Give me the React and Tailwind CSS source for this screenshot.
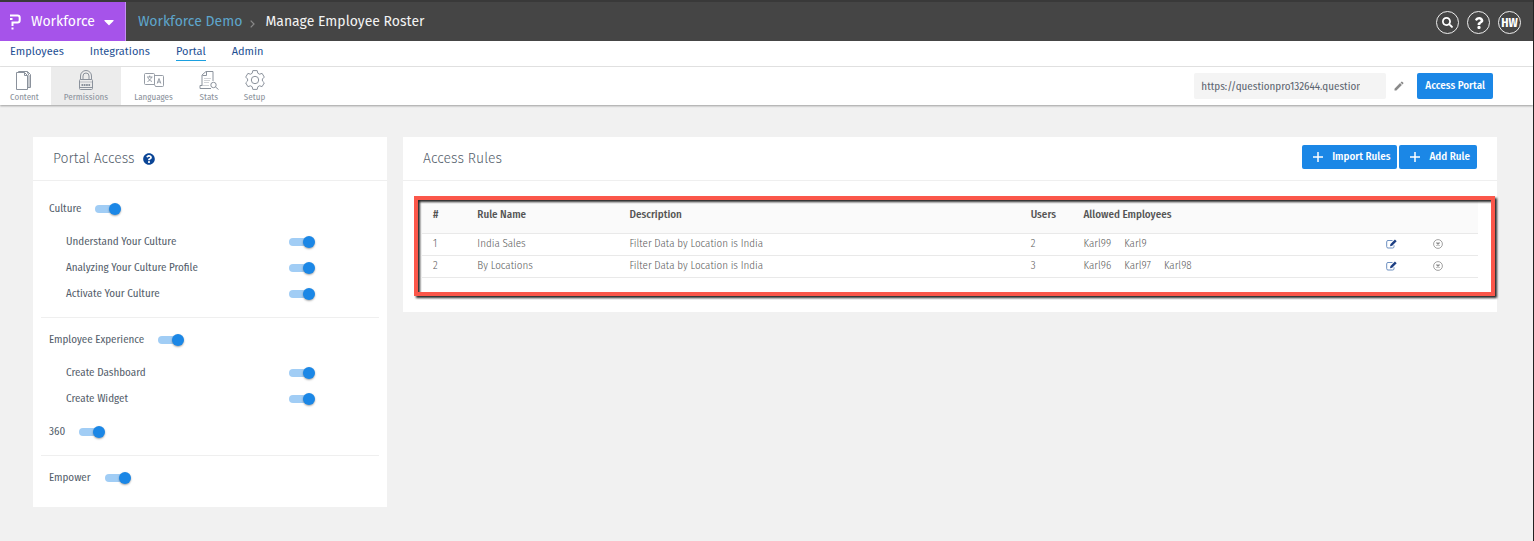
import { FaSearch, FaQuestion, FaQuestionCircle, FaCaretDown } from "react-icons/fa";
import { MdEdit } from "react-icons/md";

const TABS = ["Employees", "Integrations", "Portal", "Admin"];

const RULES = [
  { id: 1, name: "India Sales", description: "Filter Data by Location is India", users: 2, employees: ["Karl99", "Karl9"] },
  { id: 2, name: "By Locations", description: "Filter Data by Location is India", users: 3, employees: ["Karl96", "Karl97", "Karl98"] },
];

function ContentIcon() {
  return (
    <svg viewBox="0 0 20 20" className="h-5 w-5" fill="none" stroke="currentColor" strokeWidth="1" aria-hidden="true">
      <path d="M2.500 2.500h8l3 3v14h-11z" />
      <path d="M10.500 2.500v3h3" />
      <path d="M4.500 2.500v-1h9l3 3v13h-3M13 1.500l2 4v12" />
    </svg>
  );
}

function LockIcon() {
  return (
    <svg viewBox="0 0 20 20" className="h-5 w-5" fill="none" stroke="currentColor" strokeWidth="1" aria-hidden="true">
      <path d="M4.500 9.500v-3.500a5.500 5.500 0 0 1 11 0v3.500M7 9.500v-3.500a3 3 0 0 1 6 0v3.500" />
      <rect x="3.500" y="9.500" width="13" height="10" rx="1" />
      <path d="M3.500 12h13" strokeOpacity="0.500" />
      <path d="M5.500 15h9" strokeWidth="1.800" strokeDasharray="1.700 0.600" />
      <path d="M3.500 17.500h13" />
    </svg>
  );
}

function LanguagesIcon() {
  return (
    <svg viewBox="0 0 20 20" className="h-5 w-5" fill="none" stroke="currentColor" strokeWidth="0.900" aria-hidden="true">
      <path d="M10.500 14.500h-9a1 1 0 0 1-1-1v-9a1 1 0 0 1 1-1h8a1 1 0 0 1 1 1z" />
      <path d="M10.500 5.500h8a1 1 0 0 1 1 1v9a1 1 0 0 1-1 1h-7l-1-2" />
      <path d="M3 7h5.500M5.700 5.500v1.500M3.500 11.500c2-.8 3.500-2.500 4-4.500M4 7.500c.5 1.800 2 3.200 4 4" />
      <path d="M13.200 13.500l1.800-5 1.800 5M13.800 12h2.400" />
    </svg>
  );
}

function StatsIcon() {
  return (
    <svg viewBox="0 0 20 20" className="h-5 w-5" fill="none" stroke="currentColor" strokeWidth="1" aria-hidden="true">
      <path d="M12 18.500h-11v-3h2v-10.500l4-3.500h7v9.500" />
      <path d="M7.500 1.500v4h-4" />
      <path d="M5 8.500h7M5 10.500h6M5 12.500h5" strokeOpacity="0.400" />
      <path d="M3 15.500h7" strokeOpacity="0.400" />
      <circle cx="14.500" cy="15" r="2.700" />
      <path d="M16.500 17l3 2.500" />
    </svg>
  );
}

function SetupIcon() {
  return (
    <svg viewBox="0 0 20 20" className="h-5 w-5" fill="none" stroke="currentColor" strokeWidth="1" strokeLinejoin="round" aria-hidden="true">
      <path d="M7.800 .6h4.400l.6 2.600 1.700 1 2.600-.8 2.200 3.700-1.900 1.900v2l1.900 1.900-2.200 3.700-2.600-.8-1.700 1-.6 2.600h-4.400l-.6-2.600-1.700-1-2.600.8-2.200-3.700 1.900-1.900v-2l-1.900-1.900 2.200-3.700 2.600.8 1.700-1z" />
      <circle cx="10" cy="10" r="3.700" />
    </svg>
  );
}

const TOOLS = [
  { label: "Content", Icon: ContentIcon },
  { label: "Permissions", Icon: LockIcon },
  { label: "Languages", Icon: LanguagesIcon },
  { label: "Stats", Icon: StatsIcon },
  { label: "Setup", Icon: SetupIcon },
];

function PlusIcon() {
  return (
    <svg viewBox="0 0 12 12" className="h-3 w-3" stroke="currentColor" strokeWidth="1.500" aria-hidden="true">
      <path d="M6 1v10M1 6h10" />
    </svg>
  );
}

function EditIcon() {
  return (
    <svg viewBox="0 0 11 10" className="h-[10px] w-[11px]" fill="none" aria-hidden="true">
      <path d="M6.500 1.500h-4.500a1.300 1.300 0 0 0-1.300 1.300v4.900a1.300 1.300 0 0 0 1.300 1.300h4.700a1.300 1.300 0 0 0 1.300-1.300v-1.400" stroke="#6c8fc0" />
      <path d="M4 7.300l.5-2.200 4.400-4.500 1.800 1.700-4.500 4.500z" fill="#1d3f83" />
    </svg>
  );
}

function RemoveIcon() {
  return (
    <svg viewBox="0 0 10 10" className="h-[10px] w-[10px]" fill="none" stroke="currentColor" aria-hidden="true">
      <circle cx="5" cy="5" r="4.400" strokeWidth="0.800" />
      <path d="M3.500 3.500l3 3M6.500 3.500l-3 3" strokeWidth="1.300" />
    </svg>
  );
}

function Toggle({ id }) {
  return (
    <input
      id={id}
      type="checkbox"
      role="switch"
      defaultChecked
      className="relative h-3 w-[26px] shrink-0 cursor-pointer appearance-none before:absolute before:top-[2px] before:left-0 before:h-2 before:w-6 before:rounded-full before:bg-gray-300 after:absolute after:top-0 after:left-0 after:h-3 after:w-3 after:rounded-full after:bg-gray-400 after:shadow-[0_1px_2px_rgba(0,0,0,0.35)] checked:before:bg-[#a1cdf5] checked:after:left-[14px] checked:after:bg-[#1b87e6]"
    />
  );
}

function MainToggle({ id, label }) {
  return (
    <div className="flex h-[26px] items-center gap-[14px] px-2">
      <label htmlFor={id}>{label}</label>
      <Toggle id={id} />
    </div>
  );
}

function SubToggle({ id, label }) {
  return (
    <div className="flex h-[26px] items-center justify-between pr-16 pl-[25px]">
      <label htmlFor={id}>{label}</label>
      <Toggle id={id} />
    </div>
  );
}

function RoundButton({ label, children }) {
  return (
    <button type="button" aria-label={label} className="flex h-[23px] w-[23px] items-center justify-center rounded-full border border-white/90 text-[12px] font-bold text-white">
      {children}
    </button>
  );
}

function BlueButton({ children }) {
  return (
    <button type="button" className="flex h-6 items-center gap-2 rounded-[2px] bg-[#1b87e6] pr-[7px] pl-[10px] font-medium text-white">
      <PlusIcon />
      {children}
    </button>
  );
}

export default function App() {
  return (
    <div className="flex min-h-screen flex-col border-r border-[#222] bg-[#f1f1f1] font-['Fira_Sans_Condensed','Roboto_Condensed','Noto_Sans',sans-serif] text-[11px] leading-4 text-[#545e6b]">
      <header className="flex h-[41px] items-stretch border-t-2 border-[#393939] bg-[#454545] font-['Fira_Sans','Noto_Sans',sans-serif]">
        <button type="button" className="flex items-center border-r border-[#c48cf3] bg-[#a653ea] pr-2 pl-[10px] text-[14px] text-white">
          <svg viewBox="0 0 11 16" className="mr-[10px] h-4 w-[11px]" fill="none" stroke="currentColor" strokeWidth="2" aria-hidden="true">
            <path d="M0 1.500h7.500a2.200 2.200 0 0 1 2.200 2.200v2.600a2.200 2.200 0 0 1-2.200 2.200h-5v3.500M0 5h2.500M1.500 14.500h2" />
          </svg>
          Workforce
          <FaCaretDown className="ml-[6px] h-4 w-4" />
        </button>
        <nav aria-label="Breadcrumb" className="flex flex-1 items-center pl-3 text-[14px]">
          <a href="#demo" className="text-[#5ea5cc]">Workforce Demo</a>
          <svg viewBox="0 0 5 8" className="mt-1 mr-[10px] ml-2 h-2 w-[5px]" fill="none" stroke="#8a8a8a" strokeWidth="1.200" aria-hidden="true">
            <path d="M.7 .7l3.300 3.300-3.300 3.300" />
          </svg>
          <span className="text-[#f3f3f3]">Manage Employee Roster</span>
        </nav>
        <div className="flex items-center gap-2 pt-[2px] pr-3 font-['Fira_Sans_Condensed','Roboto_Condensed',sans-serif]">
          <RoundButton label="Search"><FaSearch className="h-[11px] w-[11px]" /></RoundButton>
          <RoundButton label="Help"><FaQuestion className="h-3 w-3" /></RoundButton>
          <RoundButton label="Account">HW</RoundButton>
        </div>
      </header>

      <nav aria-label="Main" className="flex h-[26px] items-start gap-[26px] border-b border-[#e6e6e6] bg-white pt-[3px] pl-[10px] font-['Fira_Sans','Noto_Sans',sans-serif] text-[11px] text-[#1d4f93]">
        {TABS.map((tab) => (
          <a key={tab} href={`#${tab.toLowerCase()}`} className={tab === "Portal" ? "border-b border-[#1ba0e0]" : ""}>
            {tab}
          </a>
        ))}
      </nav>

      <div className="flex h-[38px] items-stretch bg-white shadow-[0_1px_2px_rgba(0,0,0,0.35)]">
        <div className="flex pr-4 text-[9px] leading-[10px] text-[#8b929c]">
          {TOOLS.map(({ label, Icon }) => (
            <button
              key={label}
              type="button"
              className={`flex flex-col items-center gap-[2px] px-[13px] pt-[3px] first:pr-3 first:pl-[10px] last:pl-3 ${label === "Permissions" ? "bg-[#ececec]" : ""}`}
            >
              <Icon />
              {label}
            </button>
          ))}
        </div>
        <div className="ml-auto flex items-center pr-10">
          <input
            aria-label="Portal address"
            readOnly
            defaultValue="https://questionpro132644.questionpro.com"
            className="h-[26px] w-48 rounded-[2px] border-r-[26px] border-[#f4f4f4] bg-[#f4f4f4] pl-[7px] text-[#5c6570] outline-none"
          />
          <button type="button" aria-label="Edit address" className="mr-3 ml-[7px] text-[#8a8a8a]">
            <MdEdit className="h-3 w-3" />
          </button>
          <button type="button" className="h-[26px] rounded-[2px] bg-[#1b87e6] px-2 font-medium text-white">Access Portal</button>
        </div>
      </div>

      <main className="flex items-start gap-4 py-8 pr-9 pl-[33px]">
        <section className="w-[354px] shrink-0 bg-white">
          <h2 className="flex h-11 items-center gap-2 border-b border-[#efefef] pl-5 font-['Fira_Sans','Noto_Sans',sans-serif] text-[14px] font-light">
            Portal Access
            <FaQuestionCircle className="h-3 w-3 text-[#0b4596]" />
          </h2>
          <div className="px-2 py-[6px]">
            <div className="border-b border-[#efefef] pt-[9px] pb-[10px]">
              <MainToggle id="culture" label="Culture" />
              <div className="mt-[7px]">
                <SubToggle id="understand" label="Understand Your Culture" />
                <SubToggle id="analyze" label="Analyzing Your Culture Profile" />
                <SubToggle id="activate" label="Activate Your Culture" />
              </div>
            </div>
            <div className="border-b border-[#efefef] pt-[9px] pb-[10px]">
              <MainToggle id="experience" label="Employee Experience" />
              <div className="my-[7px]">
                <SubToggle id="dashboard" label="Create Dashboard" />
                <SubToggle id="widget" label="Create Widget" />
              </div>
              <MainToggle id="full-circle" label="360" />
            </div>
            <div className="pt-[9px] pb-[10px]">
              <MainToggle id="empower" label="Empower" />
            </div>
          </div>
        </section>

        <section className="min-w-0 flex-1 bg-white pb-4">
          <div className="flex h-11 items-center justify-between border-b border-[#efefef] pr-5 pb-1 pl-5">
            <h2 className="pt-1 font-['Fira_Sans','Noto_Sans',sans-serif] text-[14px] font-light">Access Rules</h2>
            <div className="flex gap-[2px]">
              <BlueButton>Import Rules</BlueButton>
              <BlueButton>Add Rule</BlueButton>
            </div>
          </div>
          <div className="relative mt-[15px] mr-[2px] ml-[11px] pt-1 pr-[17px] pb-[18px] pl-2">
            <table className="w-full table-fixed border-collapse text-left font-light text-[#5c5c5c]">
              <colgroup>
                <col className="w-[4.2%]" />
                <col className="w-[14.4%]" />
                <col className="w-[38%]" />
                <col className="w-[5%]" />
                <col className="w-[28.6%]" />
                <col className="w-[4.5%]" />
                <col />
              </colgroup>
              <thead>
                <tr className="h-[33px] border-b border-[#e9e9e9] bg-[#fafafa] text-[#545454]">
                  {["#", "Rule Name", "Description", "Users", "Allowed Employees"].map((title) => (
                    <th key={title} scope="col" className="pb-[2px] pl-[11px] font-medium">{title}</th>
                  ))}
                  <td />
                  <td />
                </tr>
              </thead>
              <tbody>
                {RULES.map((rule) => (
                  <tr key={rule.id} className="h-[22px] border-b border-[#e9e9e9]">
                    <td className="pl-[11px]">{rule.id}</td>
                    <td className="pl-[11px]">{rule.name}</td>
                    <td className="pl-[11px]">{rule.description}</td>
                    <td className="pl-[11px]">{rule.users}</td>
                    <td className="pl-[11px]">
                      <span className="flex gap-[13px]">
                        {rule.employees.map((name) => <span key={name}>{name}</span>)}
                      </span>
                    </td>
                    <td className="pl-3">
                      <button type="button" aria-label={`Edit ${rule.name}`} className="block">
                        <EditIcon />
                      </button>
                    </td>
                    <td className="pl-[11px]">
                      <button type="button" aria-label={`Remove ${rule.name}`} className="block text-[#8a8a8a]">
                        <RemoveIcon />
                      </button>
                    </td>
                  </tr>
                ))}
              </tbody>
            </table>
            <div className="pointer-events-none absolute inset-0 border-4 border-[#fb574a] drop-shadow-[2px_2px_1px_rgba(0,0,0,0.85)]" />
          </div>
        </section>
      </main>
    </div>
  );
}
